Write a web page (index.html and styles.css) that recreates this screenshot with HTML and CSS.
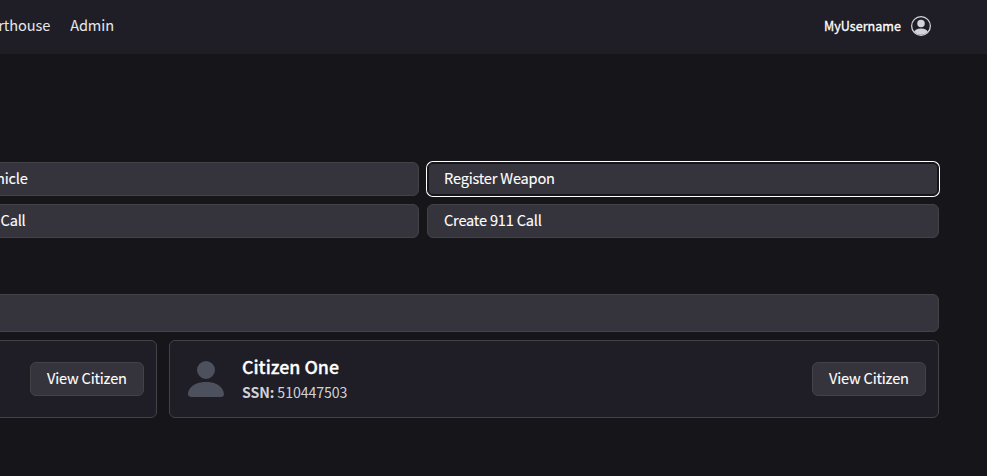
FILE: index.html
```
<!DOCTYPE html>
<html lang="en">
<head>
<meta charset="utf-8">
<title>Citizens</title>
<link rel="stylesheet" href="styles.css">
</head>
<body>
<nav class="nav">
  <div class="nav-links"><a>Courthouse</a><a>Admin</a></div>
  <button class="account"><span>MyUsername</span>
    <svg width="20" height="20" viewBox="0 0 16 16" fill="currentColor"><path d="M13.468 12.37C12.758 11.226 11.195 10 8 10s-4.757 1.225-5.468 2.37A6.987 6.987 0 0 0 8 15a6.987 6.987 0 0 0 5.468-2.63z"/><path d="M8 9a3 3 0 1 0 0-6 3 3 0 0 0 0 6z"/><path fill-rule="evenodd" d="M8 1a7 7 0 1 0 0 14A7 7 0 0 0 8 1zM0 8a8 8 0 1 1 16 0A8 8 0 0 1 0 8z"/></svg>
  </button>
</nav>
<main class="container">
  <div class="actions">
    <button class="btn">Create Citizen</button>
    <button class="btn">Register Vehicle</button>
    <button class="btn focused">Register Weapon</button>
    <button class="btn">Create Taxi Call</button>
    <button class="btn">Create Tow Call</button>
    <button class="btn">Create 911 Call</button>
  </div>
  <div class="search"></div>
  <div class="cards">
    <article class="card"><button class="btn">View Citizen</button></article>
    <article class="card">
      <svg class="avatar" width="48" height="48" viewBox="0 0 16 16" fill="currentColor"><path d="M3 14s-1 0-1-1 1-4 6-4 6 3 6 4-1 1-1 1H3zm5-6a3 3 0 1 0 0-6 3 3 0 0 0 0 6z"/></svg>
      <div class="info"><h2>Citizen One</h2><p><b>SSN:</b> 510447503</p></div>
      <button class="btn">View Citizen</button>
    </article>
  </div>
</main>
</body>
</html>
```
FILE: styles.css
```
* { box-sizing: border-box; }
body { margin: 0; height: 476px; overflow: hidden; background: #16151a; color: #fff; font: 14.6px/24px "Noto Sans CJK SC", "Noto Sans", sans-serif; }
button { font: inherit; color: inherit; }
.nav { height: 54px; background: #1f1e26; display: flex; align-items: center; justify-content: space-between; padding: 0 56px 2px 0; color: #e5e7eb; }
.nav-links { display: flex; justify-content: flex-end; gap: 20px; width: 114px; padding-bottom: 2px; letter-spacing: -.1px; }
.account { display: flex; align-items: center; gap: 10px; padding: 0; border: 0; background: none; font-size: 12.6px; color: #fff; -webkit-text-stroke: .3px; }
.account svg { color: #d3d3dd; }
.container { width: 1552px; margin: 108px 0 0 -613px; }
.actions { display: grid; grid-template-columns: repeat(3, 512px); gap: 8px; }
.btn { height: 34px; padding: 0 16px 2px; border: 1px solid #434247; border-radius: 6px; background: #35343c; text-align: left; line-height: 24px; white-space: nowrap; letter-spacing: -.2px; -webkit-text-stroke: .1px; }
.focused { border-color: #16151a; box-shadow: inset 0 0 0 1px #16151a, 0 0 0 1px #fff; }
.search { height: 38px; margin-top: 56px; border: 1px solid #434247; border-radius: 6px; background: #35343c; }
.cards { display: grid; grid-template-columns: 1fr 1fr; gap: 12px; margin-top: 8px; }
.card { height: 78px; display: flex; align-items: center; gap: 12px; padding: 0 12px; border: 1px solid #434247; border-radius: 6px; background: #1f1e26; }
.card .btn { width: 114px; margin-left: auto; }
.avatar { color: #4d515d; }
.info { padding-bottom: 1px; }
h2 { margin: 0; font-size: 17.8px; line-height: 27px; font-weight: 500; -webkit-text-stroke: .3px; }
p { margin: 0; font-size: 14.2px; letter-spacing: -.1px; color: #d1d1d9; }
```
